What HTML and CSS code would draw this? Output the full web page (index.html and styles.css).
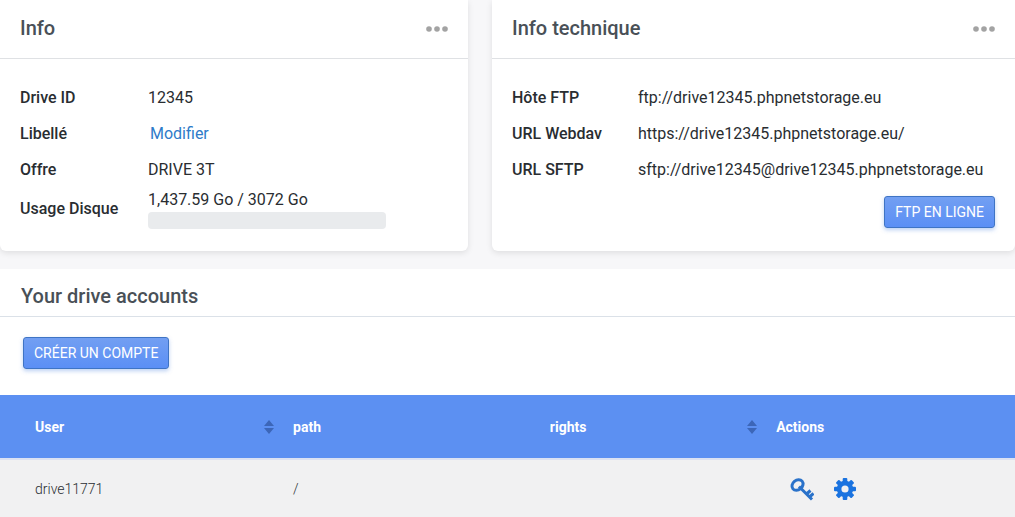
FILE: index.html
```html
<!DOCTYPE html>
<html lang="fr">
  <head>
    <meta charset="UTF-8" />
    <meta name="viewport" content="width=device-width, initial-scale=1.0" />
    <title>Drive</title>
    <link rel="stylesheet" href="styles.css">
  </head>
  <body>
    <div class="cards">
      <section class="card">
        <header class="card-header">
          <h2>Info</h2>
          <button class="more-btn" type="button" aria-label="Menu">
            <svg width="22" height="6" viewBox="0 0 22 6"><circle cx="3" cy="3" r="2.800" /><circle cx="11" cy="3" r="2.800" /><circle cx="19" cy="3" r="2.800" /></svg>
          </button>
        </header>
        <div class="card-body">
          <table class="info-table">
            <tr><th scope="row">Drive ID</th><td>12345</td></tr>
            <tr><th scope="row">Libellé</th><td><a class="edit-link" href="#">Modifier</a></td></tr>
            <tr><th scope="row">Offre</th><td>DRIVE 3T</td></tr>
            <tr class="usage">
              <th scope="row">Usage Disque</th>
              <td>1,437.59 Go / 3072 Go<div class="usage-bar"></div></td>
            </tr>
          </table>
        </div>
      </section>

      <section class="card">
        <header class="card-header">
          <h2>Info technique</h2>
          <button class="more-btn" type="button" aria-label="Menu">
            <svg width="22" height="6" viewBox="0 0 22 6"><circle cx="3" cy="3" r="2.800" /><circle cx="11" cy="3" r="2.800" /><circle cx="19" cy="3" r="2.800" /></svg>
          </button>
        </header>
        <div class="card-body">
          <table class="info-table tech">
            <tr><th scope="row">Hôte FTP</th><td>ftp://drive12345.phpnetstorage.eu</td></tr>
            <tr><th scope="row">URL Webdav</th><td>https://drive12345.phpnetstorage.eu/</td></tr>
            <tr><th scope="row">URL SFTP</th><td>sftp://drive12345@drive12345.phpnetstorage.eu</td></tr>
          </table>
          <div class="card-actions">
            <button class="btn" type="button">FTP EN LIGNE</button>
          </div>
        </div>
      </section>
    </div>

    <section class="accounts">
      <header class="accounts-header">
        <h2>Your drive accounts</h2>
      </header>
      <div class="toolbar">
        <button class="btn" type="button">CRÉER UN COMPTE</button>
      </div>
      <table class="accounts-table">
        <thead>
          <tr>
            <th class="col-user" scope="col">
              <div class="sortable">User
                <svg width="10" height="14" viewBox="0 0 10 14"><path d="M5 0l5 6H0zM5 14l5-6H0z" /></svg>
              </div>
            </th>
            <th class="col-path" scope="col">path</th>
            <th class="col-rights" scope="col">
              <div class="sortable">rights
                <svg width="10" height="14" viewBox="0 0 10 14"><path d="M5 0l5 6H0zM5 14l5-6H0z" /></svg>
              </div>
            </th>
            <th scope="col">Actions</th>
          </tr>
        </thead>
        <tbody>
          <tr>
            <td>drive11771</td>
            <td>/</td>
            <td></td>
            <td>
              <div class="row-actions">
                <button class="icon-btn key" type="button" aria-label="Mot de passe">
                  <svg width="24" height="24" viewBox="0 0 24 24">
                    <g fill="none" stroke="currentColor" stroke-width="3">
                      <ellipse cx="7.500" cy="8" rx="6" ry="4.800" transform="rotate(-40 7.500 8)" />
                      <path d="M9 9.500L22 22.500M16.500 17l4-3.500M19.500 20l4-3.500" />
                    </g>
                  </svg>
                </button>
                <button class="icon-btn" type="button" aria-label="Réglages">
                  <svg width="22" height="22" viewBox="0 0 22 22">
                    <g fill="currentColor">
                      <rect x="8.700" y="0" width="4.600" height="22" rx="1" />
                      <rect x="8.700" y="0" width="4.600" height="22" rx="1" transform="rotate(45 11 11)" />
                      <rect x="8.700" y="0" width="4.600" height="22" rx="1" transform="rotate(90 11 11)" />
                      <rect x="8.700" y="0" width="4.600" height="22" rx="1" transform="rotate(135 11 11)" />
                      <circle cx="11" cy="11" r="8.200" />
                    </g>
                    <circle cx="11" cy="11" r="3.600" fill="#f1f1f2" />
                  </svg>
                </button>
              </div>
            </td>
          </tr>
        </tbody>
      </table>
    </section>
  </body>
</html>
```
FILE: styles.css
```css
* {
  box-sizing: border-box;
}
body {
  margin: 0;
  font-family: Roboto, "Liberation Sans", sans-serif;
  font-size: 16px;
  line-height: 24px;
  color: #292d31;
  background-color: #f7f7f9;
}
h2 {
  margin: 0;
  font-size: 20px;
  font-weight: 500;
  line-height: 24px;
  color: #495057;
}
table {
  width: 100%;
  border-collapse: collapse;
}

/* Info cards */
.cards {
  display: grid;
  grid-template-columns: 17fr 19fr;
  gap: 24px;
  margin-bottom: 18px;
}
.card {
  background-color: #fff;
  border-radius: 0 0 6px 6px;
  box-shadow: 0 2px 6px rgba(0, 0, 0, 0.1);
}
.card-header {
  display: flex;
  align-items: center;
  justify-content: space-between;
  padding: 16px 20px 18px;
  border-bottom: 1px solid #dfe1e4;
}
.card-body {
  padding: 21px 20px 22px;
}
.more-btn {
  display: flex;
  padding: 2px 0 0;
  border: none;
  background: none;
  cursor: pointer;
}
.more-btn svg {
  fill: #a3a3a3;
}
.info-table th {
  width: 128px;
  padding: 6px 0;
  font-weight: 500;
  text-align: left;
  white-space: nowrap;
}
.info-table.tech th {
  width: 126px;
}
.info-table td {
  padding: 6px 0;
}
.info-table .usage th,
.info-table .usage td {
  padding: 0;
}
.edit-link {
  padding-left: 2px;
  color: #2e7bc9;
  text-decoration: none;
}
.usage-bar {
  width: 238px;
  height: 17px;
  border-radius: 4px;
  background-color: #e9ebed;
}
.card-actions {
  display: flex;
  justify-content: flex-end;
  padding-top: 8px;
}
.btn {
  height: 32px;
  padding: 0 10px;
  border: 1px solid #3f74c4;
  border-radius: 3px;
  font-family: inherit;
  font-size: 14px;
  color: #fff;
  background: linear-gradient(#729ff2, #5b8ff5);
  box-shadow: 0 2px 4px rgba(60, 120, 220, 0.35);
  cursor: pointer;
}

/* Drive accounts */
.accounts {
  background-color: #fff;
}
.accounts-header {
  padding: 15px 21px 8px;
  border-bottom: 1px solid #dbe1e8;
}
.toolbar {
  display: flex;
  padding: 20px 23px 26px;
}
.accounts-table {
  table-layout: fixed;
  font-size: 14px;
}
.accounts-table th {
  height: 64px;
  padding: 0 19px;
  font-weight: 700;
  text-align: left;
  color: #fff;
  background-color: #5c90f2;
}
.accounts-table td {
  height: 58px;
  padding: 0 19px;
  border-top: 2px solid #dbe2f3;
  font-weight: 300;
  background-color: #f1f1f2;
}
.accounts-table th:first-child,
.accounts-table td:first-child {
  padding-left: 35px;
}
.accounts-table .sortable {
  display: flex;
  align-items: center;
  justify-content: space-between;
  margin-right: -19px;
}
.sortable svg {
  fill: #3c66b8;
}
.col-user {
  width: 27%;
}
.col-path {
  width: 25.3%;
}
.col-rights {
  width: 22.3%;
}
.row-actions {
  display: flex;
  align-items: center;
  gap: 20px;
  padding-left: 14px;
}
.icon-btn {
  display: flex;
  padding: 0;
  border: none;
  color: #1a73e0;
  background: none;
  cursor: pointer;
}
.icon-btn.key {
  color: #2a72ca;
}
```
